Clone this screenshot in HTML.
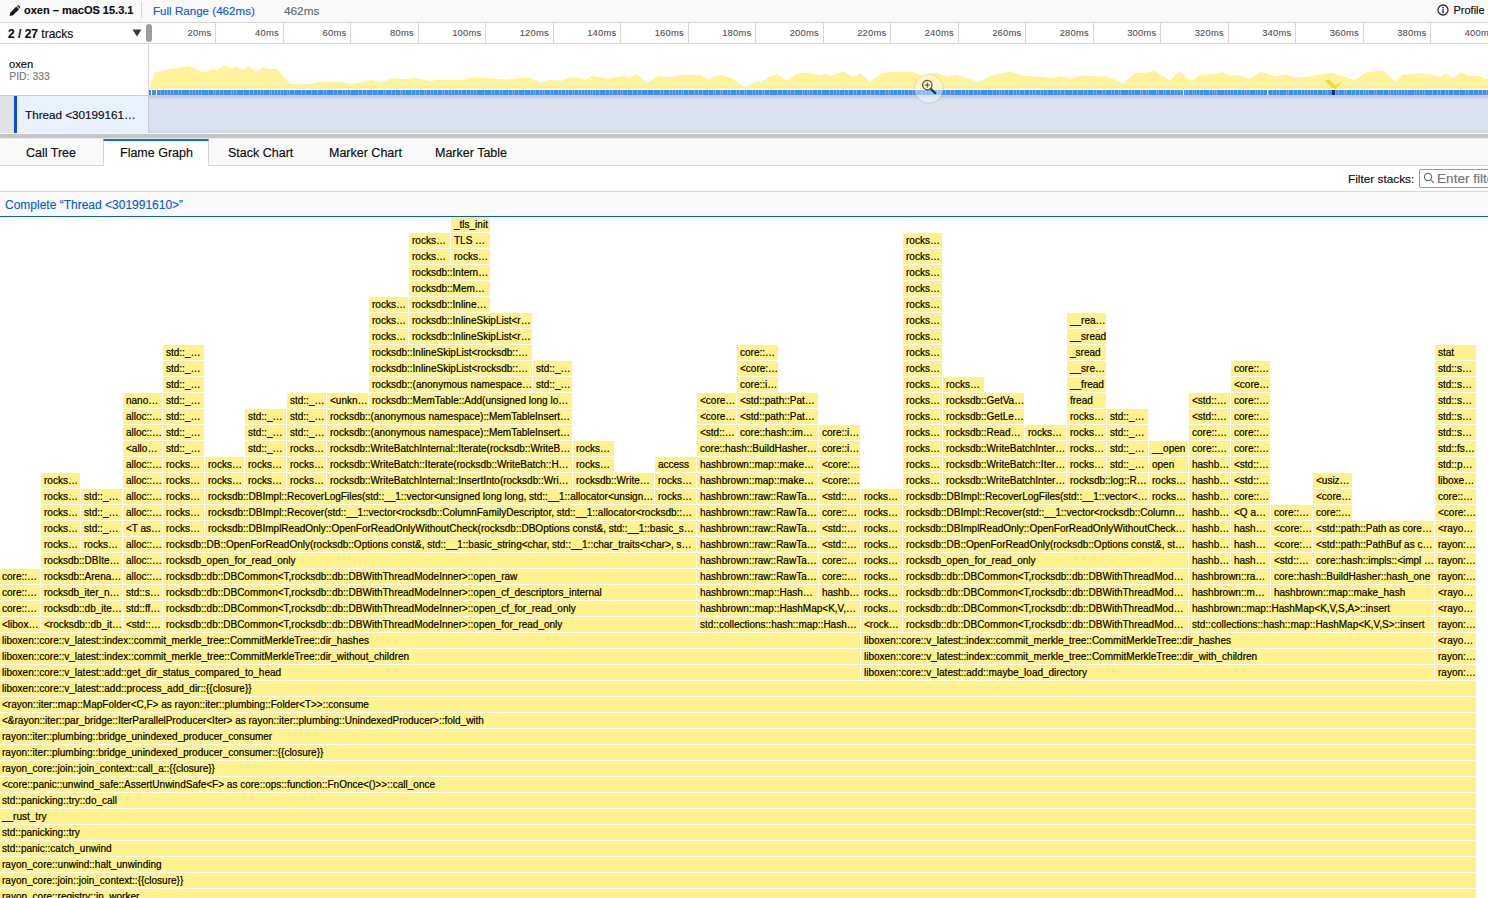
<!DOCTYPE html>
<html><head><meta charset="utf-8"><style>
*{margin:0;padding:0;box-sizing:border-box}
html,body{width:1488px;height:898px;overflow:hidden;background:#fff;font-family:"Liberation Sans",sans-serif;color:#0c0c0d;position:relative}
.a{-webkit-text-stroke:0.15px currentColor}
.a{position:absolute}
.b{position:absolute;height:15px;background:#fff28c;font-size:10px;-webkit-text-stroke:0.2px #000;line-height:15px;padding-left:3px;white-space:nowrap;overflow:hidden;color:#000}
.tk{position:absolute;top:23px;width:1px;height:20px;background:#d7d7db}
.tt{position:absolute;top:23px;width:56px;height:20px;line-height:20px;text-align:right;font-size:9.4px;letter-spacing:0.22px;color:#505054;-webkit-text-stroke:0.1px #505054}
.sg{position:absolute;top:90px;width:0.9px;height:5px;background:#72acfb}
</style></head><body>
<div class="a" style="left:0;top:0;width:1488px;height:23px;background:#f9f9fa;border-bottom:1px solid #d7d7db"></div>
<svg class="a" style="left:8.5px;top:4.5px" width="11.5" height="11.5" viewBox="0 0 16 16"><path d="M0.8 15.2 L1.9 10.3 L10.2 2 L14 5.8 L5.7 14.1 Z" fill="#1b1b1d"/><path d="M11.2 1 Q12.6 -0.4 14 1 L15 2 Q16.4 3.4 15 4.8 L14.8 5 L11 1.2 Z" fill="#1b1b1d"/><path d="M2.2 13.8 L3.5 10.8 L5.2 12.5 Z" fill="#f9f9fa" opacity="0.0"/></svg>
<div class="a" style="left:24px;top:2.7px;font-size:11px;font-weight:bold;line-height:15px;color:#0c0c0d">oxen – macOS 15.3.1</div>
<div class="a" style="left:141px;top:2px;width:1px;height:16px;background:#d7d7db"></div>
<div class="a" style="left:153px;top:2.9px;font-size:11.6px;line-height:15px;color:#0b5bd6">Full Range (462ms)</div>
<div class="a" style="left:284px;top:3.5px;font-size:11.8px;line-height:15px;color:#6a6a6e">462ms</div>
<svg class="a" style="left:1437px;top:4px" width="13" height="13" viewBox="0 0 13 13"><circle cx="6" cy="6" r="5" fill="none" stroke="#2b2b2e" stroke-width="1.3"/><rect x="5.3" y="5.2" width="1.4" height="4" fill="#2b2b2e"/><circle cx="6" cy="3.5" r="0.85" fill="#2b2b2e"/></svg>
<div class="a" style="left:1453.5px;top:2.7px;font-size:11px;line-height:15px">Profile</div>

<div class="a" style="left:0;top:23px;width:1488px;height:21px;background:#fff;border-bottom:1px solid #d7d7db"></div>
<div class="a" style="left:8px;top:26px;font-size:12px;line-height:16px"><b>2 / 27</b> tracks</div>
<svg class="a" style="left:132px;top:29px" width="10" height="8" viewBox="0 0 10 8"><path d="M0.5 0.5 L9.5 0.5 L5 7.5 Z" fill="#3a3a3e"/></svg>
<div class="a" style="left:146px;top:24px;width:6px;height:18px;border-radius:3px;background:#9d9d9f"></div>
<div class="tk" style="left:215.4px"></div><div class="tt" style="left:155.4px">20ms</div>
<div class="tk" style="left:282.9px"></div><div class="tt" style="left:222.9px">40ms</div>
<div class="tk" style="left:350.4px"></div><div class="tt" style="left:290.4px">60ms</div>
<div class="tk" style="left:417.9px"></div><div class="tt" style="left:357.9px">80ms</div>
<div class="tk" style="left:485.4px"></div><div class="tt" style="left:425.4px">100ms</div>
<div class="tk" style="left:552.9px"></div><div class="tt" style="left:492.9px">120ms</div>
<div class="tk" style="left:620.4px"></div><div class="tt" style="left:560.4px">140ms</div>
<div class="tk" style="left:687.9px"></div><div class="tt" style="left:627.9px">160ms</div>
<div class="tk" style="left:755.4px"></div><div class="tt" style="left:695.4px">180ms</div>
<div class="tk" style="left:822.9px"></div><div class="tt" style="left:762.9px">200ms</div>
<div class="tk" style="left:890.4px"></div><div class="tt" style="left:830.4px">220ms</div>
<div class="tk" style="left:957.9px"></div><div class="tt" style="left:897.9px">240ms</div>
<div class="tk" style="left:1025.4px"></div><div class="tt" style="left:965.4px">260ms</div>
<div class="tk" style="left:1092.9px"></div><div class="tt" style="left:1032.9px">280ms</div>
<div class="tk" style="left:1160.4px"></div><div class="tt" style="left:1100.4px">300ms</div>
<div class="tk" style="left:1227.9px"></div><div class="tt" style="left:1167.9px">320ms</div>
<div class="tk" style="left:1295.4px"></div><div class="tt" style="left:1235.4px">340ms</div>
<div class="tk" style="left:1362.9px"></div><div class="tt" style="left:1302.9px">360ms</div>
<div class="tk" style="left:1430.4px"></div><div class="tt" style="left:1370.4px">380ms</div>
<div class="tk" style="left:1497.9px"></div><div class="tt" style="left:1437.9px">400ms</div>

<div class="a" style="left:148px;top:44px;width:1px;height:52px;background:#d7d7db"></div>
<div class="a" style="left:9px;top:57px;font-size:11.2px;line-height:14px">oxen</div>
<div class="a" style="left:9.3px;top:69.7px;font-size:10.4px;line-height:13px;color:#7a7a7a">PID: 333</div>
<svg class="a" style="left:0;top:0" width="1488" height="96"><polygon points="148.0,89.0 149.0,89.0 151.9,80.1 155.3,72.1 158.7,71.5 163.3,71.0 170.0,68.7 177.0,68.3 187.3,66.0 194.1,67.6 202.0,71.7 206.7,71.5 212.4,69.2 217.0,70.3 224.5,65.3 230.7,68.7 236.4,66.4 242.1,69.9 249.0,66.0 257.0,72.8 262.7,66.9 269.5,69.2 276.4,68.7 282.1,75.6 290.1,84.0 295.8,84.0 309.5,84.3 321.0,81.7 339.2,82.0 350.7,84.0 362.0,82.0 371.2,80.1 380.4,82.4 393.0,78.3 405.5,79.2 414.7,77.9 430.6,81.3 437.5,79.7 462.6,80.1 469.5,77.9 480.0,77.9 493.7,78.5 505.1,79.7 512.0,79.0 528.0,77.2 540.6,82.9 549.7,80.1 562.3,80.8 570.3,77.2 580.5,78.3 585.1,80.1 592.0,76.0 608.0,78.5 622.8,76.0 629.7,77.9 636.5,73.7 646.8,82.9 658.2,76.0 672.0,77.4 678.8,75.1 699.4,74.4 708.5,79.7 720.0,74.4 731.4,77.9 745.1,88.1 756.5,81.3 761.0,82.9 767.9,77.4 777.0,74.2 787.4,80.6 797.6,73.3 809.0,72.8 820.0,75.6 824.1,73.7 831.0,76.0 843.6,71.5 852.7,76.7 860.7,73.3 869.8,82.4 881.3,73.3 895.0,71.7 913.3,72.1 922.4,75.6 936.0,72.8 947.5,76.7 956.7,75.1 965.8,77.9 978.4,82.0 993.2,75.1 1009.2,71.7 1025.2,76.0 1041.2,76.7 1052.7,78.3 1060.7,76.0 1070.9,78.3 1082.4,75.6 1107.5,76.7 1123.5,83.6 1135.0,72.8 1146.4,72.8 1154.5,70.9 1161.4,75.0 1170.4,80.4 1179.1,71.4 1190.9,81.1 1202.2,74.3 1213.6,74.3 1222.7,72.0 1230.6,75.9 1238.6,75.0 1248.8,78.9 1261.3,71.4 1274.9,76.6 1286.3,74.3 1294.3,77.7 1309.0,76.6 1331.7,72.7 1354.4,80.0 1367.0,72.0 1384.0,70.4 1395.3,81.8 1402.2,75.0 1418.0,73.2 1434.0,75.0 1439.6,77.7 1446.4,73.6 1453.3,78.2 1461.2,72.5 1468.0,76.1 1479.4,75.9 1486.2,79.5 1488.0,77.7 1488.0,89.0" fill="#fff29c"/></svg>
<div class="a" style="left:149px;top:90px;width:1339px;height:5px;background:#3a8ffb"></div>
<div class="sg" style="left:160.0px"></div><div class="sg" style="left:164.0px"></div><div class="sg" style="left:167.2px"></div><div class="sg" style="left:169.7px"></div><div class="sg" style="left:173.2px"></div><div class="sg" style="left:178.2px"></div><div class="sg" style="left:181.4px"></div><div class="sg" style="left:188.9px"></div><div class="sg" style="left:192.1px"></div><div class="sg" style="left:195.1px"></div><div class="sg" style="left:198.3px"></div><div class="sg" style="left:200.5px"></div><div class="sg" style="left:208.0px"></div><div class="sg" style="left:212.5px"></div><div class="sg" style="left:215.0px"></div><div class="sg" style="left:219.0px"></div><div class="sg" style="left:223.0px"></div><div class="sg" style="left:230.5px"></div><div class="sg" style="left:233.0px"></div><div class="sg" style="left:235.5px"></div><div class="sg" style="left:243.0px"></div><div class="sg" style="left:249.0px"></div><div class="sg" style="left:252.5px"></div><div class="sg" style="left:256.5px"></div><div class="sg" style="left:260.0px"></div><div class="sg" style="left:262.5px"></div><div class="sg" style="left:268.5px"></div><div class="sg" style="left:270.7px"></div><div class="sg" style="left:273.7px"></div><div class="sg" style="left:277.2px"></div><div class="sg" style="left:280.4px"></div><div class="sg" style="left:282.6px"></div><div class="sg" style="left:287.1px"></div><div class="sg" style="left:289.3px"></div><div class="sg" style="left:293.8px"></div><div class="sg" style="left:301.3px"></div><div class="sg" style="left:304.5px"></div><div class="sg" style="left:310.5px"></div><div class="sg" style="left:316.5px"></div><div class="sg" style="left:322.5px"></div><div class="sg" style="left:325.7px"></div><div class="sg" style="left:333.2px"></div><div class="sg" style="left:336.7px"></div><div class="sg" style="left:341.7px"></div><div class="sg" style="left:344.7px"></div><div class="sg" style="left:346.9px"></div><div class="sg" style="left:350.4px"></div><div class="sg" style="left:357.9px"></div><div class="sg" style="left:361.9px"></div><div class="sg" style="left:366.4px"></div><div class="sg" style="left:372.4px"></div><div class="sg" style="left:376.9px"></div><div class="sg" style="left:382.9px"></div><div class="sg" style="left:385.4px"></div><div class="sg" style="left:391.4px"></div><div class="sg" style="left:394.6px"></div><div class="sg" style="left:399.6px"></div><div class="sg" style="left:402.1px"></div><div class="sg" style="left:405.3px"></div><div class="sg" style="left:411.3px"></div><div class="sg" style="left:414.5px"></div><div class="sg" style="left:418.5px"></div><div class="sg" style="left:423.5px"></div><div class="sg" style="left:425.7px"></div><div class="sg" style="left:430.2px"></div><div class="sg" style="left:433.4px"></div><div class="sg" style="left:436.9px"></div><div class="sg" style="left:441.9px"></div><div class="sg" style="left:444.4px"></div><div class="sg" style="left:447.6px"></div><div class="sg" style="left:450.8px"></div><div class="sg" style="left:453.8px"></div><div class="sg" style="left:457.8px"></div><div class="sg" style="left:461.0px"></div><div class="sg" style="left:465.5px"></div><div class="sg" style="left:470.0px"></div><div class="sg" style="left:473.0px"></div><div class="sg" style="left:476.0px"></div><div class="sg" style="left:483.5px"></div><div class="sg" style="left:491.0px"></div><div class="sg" style="left:494.0px"></div><div class="sg" style="left:499.0px"></div><div class="sg" style="left:502.0px"></div><div class="sg" style="left:508.0px"></div><div class="sg" style="left:511.5px"></div><div class="sg" style="left:513.7px"></div><div class="sg" style="left:518.2px"></div><div class="sg" style="left:524.2px"></div><div class="sg" style="left:530.2px"></div><div class="sg" style="left:533.2px"></div><div class="sg" style="left:535.4px"></div><div class="sg" style="left:538.6px"></div><div class="sg" style="left:541.8px"></div><div class="sg" style="left:544.0px"></div><div class="sg" style="left:550.0px"></div><div class="sg" style="left:553.2px"></div><div class="sg" style="left:558.2px"></div><div class="sg" style="left:560.7px"></div><div class="sg" style="left:565.2px"></div><div class="sg" style="left:567.7px"></div><div class="sg" style="left:571.7px"></div><div class="sg" style="left:573.9px"></div><div class="sg" style="left:578.4px"></div><div class="sg" style="left:580.6px"></div><div class="sg" style="left:583.6px"></div><div class="sg" style="left:586.6px"></div><div class="sg" style="left:589.8px"></div><div class="sg" style="left:592.3px"></div><div class="sg" style="left:594.5px"></div><div class="sg" style="left:598.5px"></div><div class="sg" style="left:604.5px"></div><div class="sg" style="left:609.0px"></div><div class="sg" style="left:612.2px"></div><div class="sg" style="left:616.7px"></div><div class="sg" style="left:620.2px"></div><div class="sg" style="left:622.4px"></div><div class="sg" style="left:627.4px"></div><div class="sg" style="left:632.4px"></div><div class="sg" style="left:637.4px"></div><div class="sg" style="left:640.9px"></div><div class="sg" style="left:646.9px"></div><div class="sg" style="left:652.9px"></div><div class="sg" style="left:660.4px"></div><div class="sg" style="left:662.9px"></div><div class="sg" style="left:668.9px"></div><div class="sg" style="left:672.1px"></div><div class="sg" style="left:674.6px"></div><div class="sg" style="left:677.6px"></div><div class="sg" style="left:680.8px"></div><div class="sg" style="left:683.3px"></div><div class="sg" style="left:687.8px"></div><div class="sg" style="left:693.8px"></div><div class="sg" style="left:697.8px"></div><div class="sg" style="left:702.3px"></div><div class="sg" style="left:708.3px"></div><div class="sg" style="left:712.8px"></div><div class="sg" style="left:715.3px"></div><div class="sg" style="left:719.8px"></div><div class="sg" style="left:722.3px"></div><div class="sg" style="left:727.3px"></div><div class="sg" style="left:729.5px"></div><div class="sg" style="left:735.5px"></div><div class="sg" style="left:738.7px"></div><div class="sg" style="left:743.7px"></div><div class="sg" style="left:745.9px"></div><div class="sg" style="left:751.9px"></div><div class="sg" style="left:755.1px"></div><div class="sg" style="left:758.3px"></div><div class="sg" style="left:761.8px"></div><div class="sg" style="left:764.0px"></div><div class="sg" style="left:769.0px"></div><div class="sg" style="left:776.5px"></div><div class="sg" style="left:781.5px"></div><div class="sg" style="left:786.5px"></div><div class="sg" style="left:789.7px"></div><div class="sg" style="left:794.2px"></div><div class="sg" style="left:801.7px"></div><div class="sg" style="left:803.9px"></div><div class="sg" style="left:807.1px"></div><div class="sg" style="left:809.3px"></div><div class="sg" style="left:811.5px"></div><div class="sg" style="left:816.5px"></div><div class="sg" style="left:821.0px"></div><div class="sg" style="left:828.5px"></div><div class="sg" style="left:833.0px"></div><div class="sg" style="left:836.2px"></div><div class="sg" style="left:839.4px"></div><div class="sg" style="left:844.4px"></div><div class="sg" style="left:847.9px"></div><div class="sg" style="left:852.9px"></div><div class="sg" style="left:856.4px"></div><div class="sg" style="left:861.4px"></div><div class="sg" style="left:866.4px"></div><div class="sg" style="left:869.6px"></div><div class="sg" style="left:874.1px"></div><div class="sg" style="left:878.6px"></div><div class="sg" style="left:884.6px"></div><div class="sg" style="left:887.6px"></div><div class="sg" style="left:889.8px"></div><div class="sg" style="left:893.0px"></div><div class="sg" style="left:896.5px"></div><div class="sg" style="left:901.0px"></div><div class="sg" style="left:903.5px"></div><div class="sg" style="left:907.5px"></div><div class="sg" style="left:912.0px"></div><div class="sg" style="left:916.0px"></div><div class="sg" style="left:921.0px"></div><div class="sg" style="left:924.5px"></div><div class="sg" style="left:930.5px"></div><div class="sg" style="left:933.5px"></div><div class="sg" style="left:936.5px"></div><div class="sg" style="left:939.7px"></div><div class="sg" style="left:944.7px"></div><div class="sg" style="left:949.7px"></div><div class="sg" style="left:953.7px"></div><div class="sg" style="left:961.2px"></div><div class="sg" style="left:964.7px"></div><div class="sg" style="left:967.7px"></div><div class="sg" style="left:972.7px"></div><div class="sg" style="left:976.7px"></div><div class="sg" style="left:979.9px"></div><div class="sg" style="left:987.4px"></div><div class="sg" style="left:991.9px"></div><div class="sg" style="left:995.9px"></div><div class="sg" style="left:998.9px"></div><div class="sg" style="left:1001.1px"></div><div class="sg" style="left:1003.6px"></div><div class="sg" style="left:1007.6px"></div><div class="sg" style="left:1012.6px"></div><div class="sg" style="left:1015.8px"></div><div class="sg" style="left:1019.3px"></div><div class="sg" style="left:1023.8px"></div><div class="sg" style="left:1028.8px"></div><div class="sg" style="left:1031.8px"></div><div class="sg" style="left:1035.0px"></div><div class="sg" style="left:1040.0px"></div><div class="sg" style="left:1043.2px"></div><div class="sg" style="left:1046.7px"></div><div class="sg" style="left:1052.7px"></div><div class="sg" style="left:1057.2px"></div><div class="sg" style="left:1059.7px"></div><div class="sg" style="left:1064.2px"></div><div class="sg" style="left:1071.7px"></div><div class="sg" style="left:1076.7px"></div><div class="sg" style="left:1082.7px"></div><div class="sg" style="left:1087.2px"></div><div class="sg" style="left:1093.2px"></div><div class="sg" style="left:1096.4px"></div><div class="sg" style="left:1102.4px"></div><div class="sg" style="left:1104.6px"></div><div class="sg" style="left:1110.6px"></div><div class="sg" style="left:1114.1px"></div><div class="sg" style="left:1118.1px"></div><div class="sg" style="left:1120.3px"></div><div class="sg" style="left:1127.8px"></div><div class="sg" style="left:1131.0px"></div><div class="sg" style="left:1133.5px"></div><div class="sg" style="left:1139.5px"></div><div class="sg" style="left:1142.0px"></div><div class="sg" style="left:1146.0px"></div><div class="sg" style="left:1148.2px"></div><div class="sg" style="left:1155.7px"></div><div class="sg" style="left:1158.2px"></div><div class="sg" style="left:1162.7px"></div><div class="sg" style="left:1165.2px"></div><div class="sg" style="left:1170.2px"></div><div class="sg" style="left:1174.2px"></div><div class="sg" style="left:1177.2px"></div><div class="sg" style="left:1180.4px"></div><div class="sg" style="left:1184.9px"></div><div class="sg" style="left:1187.9px"></div><div class="sg" style="left:1191.9px"></div><div class="sg" style="left:1194.1px"></div><div class="sg" style="left:1196.3px"></div><div class="sg" style="left:1198.8px"></div><div class="sg" style="left:1202.8px"></div><div class="sg" style="left:1208.8px"></div><div class="sg" style="left:1212.0px"></div><div class="sg" style="left:1214.2px"></div><div class="sg" style="left:1216.4px"></div><div class="sg" style="left:1223.9px"></div><div class="sg" style="left:1226.9px"></div><div class="sg" style="left:1230.4px"></div><div class="sg" style="left:1232.9px"></div><div class="sg" style="left:1237.4px"></div><div class="sg" style="left:1241.4px"></div><div class="sg" style="left:1243.6px"></div><div class="sg" style="left:1246.1px"></div><div class="sg" style="left:1248.6px"></div><div class="sg" style="left:1254.6px"></div><div class="sg" style="left:1256.8px"></div><div class="sg" style="left:1260.0px"></div><div class="sg" style="left:1263.0px"></div><div class="sg" style="left:1268.0px"></div><div class="sg" style="left:1271.5px"></div><div class="sg" style="left:1276.0px"></div><div class="sg" style="left:1278.5px"></div><div class="sg" style="left:1286.0px"></div><div class="sg" style="left:1288.2px"></div><div class="sg" style="left:1293.2px"></div><div class="sg" style="left:1297.2px"></div><div class="sg" style="left:1301.2px"></div><div class="sg" style="left:1304.2px"></div><div class="sg" style="left:1306.7px"></div><div class="sg" style="left:1309.7px"></div><div class="sg" style="left:1313.2px"></div><div class="sg" style="left:1317.2px"></div><div class="sg" style="left:1321.7px"></div><div class="sg" style="left:1325.2px"></div><div class="sg" style="left:1327.4px"></div><div class="sg" style="left:1334.9px"></div><div class="sg" style="left:1338.1px"></div><div class="sg" style="left:1344.1px"></div><div class="sg" style="left:1346.3px"></div><div class="sg" style="left:1350.8px"></div><div class="sg" style="left:1354.8px"></div><div class="sg" style="left:1359.3px"></div><div class="sg" style="left:1362.5px"></div><div class="sg" style="left:1365.0px"></div><div class="sg" style="left:1367.5px"></div><div class="sg" style="left:1373.5px"></div><div class="sg" style="left:1375.7px"></div><div class="sg" style="left:1383.2px"></div><div class="sg" style="left:1388.2px"></div><div class="sg" style="left:1390.4px"></div><div class="sg" style="left:1392.6px"></div><div class="sg" style="left:1396.1px"></div><div class="sg" style="left:1398.3px"></div><div class="sg" style="left:1401.3px"></div><div class="sg" style="left:1403.5px"></div><div class="sg" style="left:1406.5px"></div><div class="sg" style="left:1414.0px"></div><div class="sg" style="left:1416.2px"></div><div class="sg" style="left:1419.2px"></div><div class="sg" style="left:1421.7px"></div><div class="sg" style="left:1424.2px"></div><div class="sg" style="left:1431.7px"></div><div class="sg" style="left:1436.7px"></div><div class="sg" style="left:1440.2px"></div><div class="sg" style="left:1445.2px"></div><div class="sg" style="left:1448.2px"></div><div class="sg" style="left:1453.2px"></div><div class="sg" style="left:1459.2px"></div><div class="sg" style="left:1465.2px"></div><div class="sg" style="left:1468.4px"></div><div class="sg" style="left:1472.9px"></div><div class="sg" style="left:1477.9px"></div><div class="sg" style="left:1482.4px"></div><div class="sg" style="left:1486.4px"></div><div class="a" style="left:150.6px;top:90px;width:1.4px;height:5px;background:#fff"></div><div class="a" style="left:156px;top:90px;width:1.2px;height:5px;background:#fff"></div><div class="a" style="left:1183px;top:90px;width:1.2px;height:5px;background:#fff"></div><div class="a" style="left:1267px;top:90px;width:1.2px;height:5px;background:#fff"></div>
<div class="a" style="left:0;top:95px;width:1488px;height:1px;background:#cfcfd4"></div>

<div class="a" style="left:0;top:96px;width:14px;height:37px;background:#e2e2e6"></div>
<div class="a" style="left:14px;top:96px;width:3px;height:37px;background:#0b4fd8"></div>
<div class="a" style="left:17px;top:96px;width:131px;height:37px;background:#e8f1fd"></div>
<div class="a" style="left:148px;top:96px;width:1px;height:37px;background:#c9ccd2"></div>
<div class="a" style="left:149px;top:96px;width:1339px;height:37px;background:linear-gradient(to bottom,#c3c8d0 0px,#d2d9e3 2px,#d9e2ee 5px,#d9e2ee 32px,#d0d8e3 37px)"></div>
<div class="a" style="left:25px;top:107px;font-size:11.7px;line-height:16px">Thread &lt;30199161…</div>
<div class="a" style="left:0;top:133px;width:1488px;height:1px;background:#f4f6f9"></div><div class="a" style="left:0;top:134px;width:1488px;height:4px;background:#c6c6c6"></div><div class="a" style="left:0;top:138px;width:1488px;height:1px;background:#ececec"></div>

<div class="a" style="left:0;top:139px;width:1488px;height:27px;background:#f9f9fa;border-bottom:1px solid #d7d7db"></div>
<div class="a" style="left:103px;top:139px;width:106px;height:27px;background:#fff;border-left:1px solid #d7d7db;border-right:1px solid #d7d7db;border-top:2px solid #0a6cf5"></div>
<div class="a" style="left:26px;top:144.5px;font-size:12.5px;line-height:16px">Call Tree</div>
<div class="a" style="left:120px;top:144.5px;font-size:12.5px;line-height:16px">Flame Graph</div>
<div class="a" style="left:228px;top:144.5px;font-size:12.5px;line-height:16px">Stack Chart</div>
<div class="a" style="left:329px;top:144.5px;font-size:12.5px;line-height:16px">Marker Chart</div>
<div class="a" style="left:435px;top:144.5px;font-size:12.5px;line-height:16px">Marker Table</div>

<div class="a" style="left:0;top:166px;width:1488px;height:26px;background:#fff;border-bottom:1px solid #d7d7db"></div>
<div class="a" style="left:1348px;top:170.7px;font-size:11.8px;line-height:16px">Filter stacks:</div>
<div class="a" style="left:1419px;top:169px;width:80px;height:19px;border:1px solid #9a9a9e;border-radius:2px;background:#fff"></div>
<svg class="a" style="left:1423px;top:172px" width="12" height="12" viewBox="0 0 12 12"><circle cx="5" cy="5" r="3.6" fill="none" stroke="#6b6b6f" stroke-width="1.1"/><path d="M7.6 7.6 L10.8 10.8" stroke="#6b6b6f" stroke-width="1.2"/></svg>
<div class="a" style="left:1437px;top:169.5px;font-size:13.6px;line-height:17px;color:#737373;white-space:nowrap">Enter filte</div>

<div class="a" style="left:0;top:192px;width:1488px;height:24px;background:#f9f9fa"></div>
<div class="a" style="left:5px;top:197.5px;font-size:12px;line-height:15px;color:#0b5bd6">Complete “Thread &lt;301991610&gt;”</div>
<div class="a" style="left:0;top:216px;width:1488px;height:1px;background:#0b5bd6"></div>

<svg class="a" style="left:913px;top:73px" width="32" height="32" viewBox="0 0 32 32"><circle cx="15.8" cy="15.8" r="14.5" fill="rgba(255,255,255,0.4)" stroke="rgba(0,0,0,0.13)" stroke-width="0.9"/><circle cx="14.3" cy="12.1" r="4.7" fill="none" stroke="rgba(20,20,10,0.72)" stroke-width="1.2"/><path d="M11.7 12.1 H16.9 M14.3 9.5 V14.7" stroke="rgba(20,20,10,0.72)" stroke-width="1"/><path d="M18.3 16.4 L22.2 20.2" stroke="rgba(10,20,40,0.8)" stroke-width="2.4" stroke-linecap="round"/></svg>
<svg class="a" style="left:1324px;top:79px" width="20" height="11" viewBox="0 0 20 11"><path d="M1 1.8 Q4 0.5 5.5 1 Q7.5 1.8 10 5.5 Q11.5 6 13.5 5 L18.5 2.5 Q15 7 12 9.5 Q10 10 8.5 9.2 Z" fill="#fcd934"/></svg>
<div class="a" style="left:1331.5px;top:90px;width:3px;height:5px;background:#0a2a9a"></div>

<div class="b" style="left:451px;top:217px;width:39px">_tls_init</div>
<div class="b" style="left:409px;top:233px;width:41px">rocks…</div>
<div class="b" style="left:451px;top:233px;width:39px">TLS …</div>
<div class="b" style="left:903px;top:233px;width:39px">rocks…</div>
<div class="b" style="left:409px;top:249px;width:41px">rocks…</div>
<div class="b" style="left:451px;top:249px;width:39px">rocks…</div>
<div class="b" style="left:903px;top:249px;width:39px">rocks…</div>
<div class="b" style="left:409px;top:265px;width:81px">rocksdb::Intern…</div>
<div class="b" style="left:903px;top:265px;width:39px">rocks…</div>
<div class="b" style="left:409px;top:281px;width:81px">rocksdb::Mem…</div>
<div class="b" style="left:903px;top:281px;width:39px">rocks…</div>
<div class="b" style="left:369px;top:297px;width:39px">rocks…</div>
<div class="b" style="left:409px;top:297px;width:81px">rocksdb::Inline…</div>
<div class="b" style="left:903px;top:297px;width:39px">rocks…</div>
<div class="b" style="left:369px;top:313px;width:39px">rocks…</div>
<div class="b" style="left:409px;top:313px;width:123px">rocksdb::InlineSkipList&lt;r…</div>
<div class="b" style="left:903px;top:313px;width:39px">rocks…</div>
<div class="b" style="left:1067px;top:313px;width:39px">__rea…</div>
<div class="b" style="left:369px;top:329px;width:39px">rocks…</div>
<div class="b" style="left:409px;top:329px;width:123px">rocksdb::InlineSkipList&lt;r…</div>
<div class="b" style="left:903px;top:329px;width:39px">rocks…</div>
<div class="b" style="left:1067px;top:329px;width:39px">__sread</div>
<div class="b" style="left:163px;top:345px;width:41px">std::_…</div>
<div class="b" style="left:369px;top:345px;width:163px">rocksdb::InlineSkipList&lt;rocksdb::…</div>
<div class="b" style="left:737px;top:345px;width:41px">core::…</div>
<div class="b" style="left:903px;top:345px;width:39px">rocks…</div>
<div class="b" style="left:1067px;top:345px;width:39px">_sread</div>
<div class="b" style="left:1435px;top:345px;width:41px">stat</div>
<div class="b" style="left:163px;top:361px;width:41px">std::_…</div>
<div class="b" style="left:369px;top:361px;width:163px">rocksdb::InlineSkipList&lt;rocksdb::…</div>
<div class="b" style="left:533px;top:361px;width:39px">std::_…</div>
<div class="b" style="left:737px;top:361px;width:41px">&lt;core:…</div>
<div class="b" style="left:903px;top:361px;width:39px">rocks…</div>
<div class="b" style="left:1067px;top:361px;width:39px">__sre…</div>
<div class="b" style="left:1231px;top:361px;width:39px">core::…</div>
<div class="b" style="left:1435px;top:361px;width:41px">std::s…</div>
<div class="b" style="left:163px;top:377px;width:41px">std::_…</div>
<div class="b" style="left:369px;top:377px;width:163px">rocksdb::(anonymous namespace…</div>
<div class="b" style="left:533px;top:377px;width:39px">std::_…</div>
<div class="b" style="left:737px;top:377px;width:41px">core::i…</div>
<div class="b" style="left:903px;top:377px;width:39px">rocks…</div>
<div class="b" style="left:943px;top:377px;width:41px">rocks…</div>
<div class="b" style="left:1067px;top:377px;width:39px">__fread</div>
<div class="b" style="left:1231px;top:377px;width:39px">&lt;core…</div>
<div class="b" style="left:1435px;top:377px;width:41px">std::s…</div>
<div class="b" style="left:123px;top:393px;width:39px">nano…</div>
<div class="b" style="left:163px;top:393px;width:41px">std::_…</div>
<div class="b" style="left:287px;top:393px;width:39px">std::_…</div>
<div class="b" style="left:327px;top:393px;width:41px">&lt;unkn…</div>
<div class="b" style="left:369px;top:393px;width:203px">rocksdb::MemTable::Add(unsigned long lo…</div>
<div class="b" style="left:697px;top:393px;width:39px">&lt;core…</div>
<div class="b" style="left:737px;top:393px;width:81px">&lt;std::path::Pat…</div>
<div class="b" style="left:903px;top:393px;width:39px">rocks…</div>
<div class="b" style="left:943px;top:393px;width:81px">rocksdb::GetVa…</div>
<div class="b" style="left:1067px;top:393px;width:39px">fread</div>
<div class="b" style="left:1189px;top:393px;width:41px">&lt;std::…</div>
<div class="b" style="left:1231px;top:393px;width:39px">core::…</div>
<div class="b" style="left:1435px;top:393px;width:41px">std::s…</div>
<div class="b" style="left:123px;top:409px;width:39px">alloc::…</div>
<div class="b" style="left:163px;top:409px;width:41px">std::_…</div>
<div class="b" style="left:245px;top:409px;width:41px">std::_…</div>
<div class="b" style="left:287px;top:409px;width:39px">std::_…</div>
<div class="b" style="left:327px;top:409px;width:245px">rocksdb::(anonymous namespace)::MemTableInsert…</div>
<div class="b" style="left:697px;top:409px;width:39px">&lt;core…</div>
<div class="b" style="left:737px;top:409px;width:81px">&lt;std::path::Pat…</div>
<div class="b" style="left:903px;top:409px;width:39px">rocks…</div>
<div class="b" style="left:943px;top:409px;width:81px">rocksdb::GetLe…</div>
<div class="b" style="left:1067px;top:409px;width:39px">rocks…</div>
<div class="b" style="left:1107px;top:409px;width:41px">std::_…</div>
<div class="b" style="left:1189px;top:409px;width:41px">&lt;std::…</div>
<div class="b" style="left:1231px;top:409px;width:39px">core::…</div>
<div class="b" style="left:1435px;top:409px;width:41px">std::s…</div>
<div class="b" style="left:123px;top:425px;width:39px">alloc::…</div>
<div class="b" style="left:163px;top:425px;width:41px">std::_…</div>
<div class="b" style="left:245px;top:425px;width:41px">std::_…</div>
<div class="b" style="left:287px;top:425px;width:39px">std::_…</div>
<div class="b" style="left:327px;top:425px;width:245px">rocksdb::(anonymous namespace)::MemTableInsert…</div>
<div class="b" style="left:697px;top:425px;width:39px">&lt;std::…</div>
<div class="b" style="left:737px;top:425px;width:81px">core::hash::im…</div>
<div class="b" style="left:819px;top:425px;width:41px">core::i…</div>
<div class="b" style="left:903px;top:425px;width:39px">rocks…</div>
<div class="b" style="left:943px;top:425px;width:81px">rocksdb::Read…</div>
<div class="b" style="left:1025px;top:425px;width:41px">rocks…</div>
<div class="b" style="left:1067px;top:425px;width:39px">rocks…</div>
<div class="b" style="left:1107px;top:425px;width:41px">std::_…</div>
<div class="b" style="left:1189px;top:425px;width:41px">core::…</div>
<div class="b" style="left:1231px;top:425px;width:39px">core::…</div>
<div class="b" style="left:1435px;top:425px;width:41px">std::s…</div>
<div class="b" style="left:123px;top:441px;width:39px">&lt;allo…</div>
<div class="b" style="left:163px;top:441px;width:41px">std::_…</div>
<div class="b" style="left:245px;top:441px;width:41px">std::_…</div>
<div class="b" style="left:287px;top:441px;width:39px">rocks…</div>
<div class="b" style="left:327px;top:441px;width:245px">rocksdb::WriteBatchInternal::Iterate(rocksdb::WriteB…</div>
<div class="b" style="left:573px;top:441px;width:41px">rocks…</div>
<div class="b" style="left:697px;top:441px;width:121px">core::hash::BuildHasher…</div>
<div class="b" style="left:819px;top:441px;width:41px">core::i…</div>
<div class="b" style="left:903px;top:441px;width:39px">rocks…</div>
<div class="b" style="left:943px;top:441px;width:123px">rocksdb::WriteBatchInter…</div>
<div class="b" style="left:1067px;top:441px;width:39px">rocks…</div>
<div class="b" style="left:1107px;top:441px;width:41px">std::_…</div>
<div class="b" style="left:1149px;top:441px;width:39px">__open</div>
<div class="b" style="left:1189px;top:441px;width:41px">core::…</div>
<div class="b" style="left:1231px;top:441px;width:39px">core::…</div>
<div class="b" style="left:1435px;top:441px;width:41px">std::fs…</div>
<div class="b" style="left:123px;top:457px;width:39px">alloc::…</div>
<div class="b" style="left:163px;top:457px;width:41px">rocks…</div>
<div class="b" style="left:205px;top:457px;width:39px">rocks…</div>
<div class="b" style="left:245px;top:457px;width:41px">rocks…</div>
<div class="b" style="left:287px;top:457px;width:39px">rocks…</div>
<div class="b" style="left:327px;top:457px;width:245px">rocksdb::WriteBatch::Iterate(rocksdb::WriteBatch::H…</div>
<div class="b" style="left:573px;top:457px;width:41px">rocks…</div>
<div class="b" style="left:655px;top:457px;width:41px">access</div>
<div class="b" style="left:697px;top:457px;width:121px">hashbrown::map::make…</div>
<div class="b" style="left:819px;top:457px;width:41px">&lt;core:…</div>
<div class="b" style="left:903px;top:457px;width:39px">rocks…</div>
<div class="b" style="left:943px;top:457px;width:123px">rocksdb::WriteBatch::Iter…</div>
<div class="b" style="left:1067px;top:457px;width:39px">rocks…</div>
<div class="b" style="left:1107px;top:457px;width:41px">std::_…</div>
<div class="b" style="left:1149px;top:457px;width:39px">open</div>
<div class="b" style="left:1189px;top:457px;width:41px">hashb…</div>
<div class="b" style="left:1231px;top:457px;width:39px">&lt;std::…</div>
<div class="b" style="left:1435px;top:457px;width:41px">std::p…</div>
<div class="b" style="left:41px;top:473px;width:39px">rocks…</div>
<div class="b" style="left:123px;top:473px;width:39px">alloc::…</div>
<div class="b" style="left:163px;top:473px;width:41px">rocks…</div>
<div class="b" style="left:205px;top:473px;width:39px">rocks…</div>
<div class="b" style="left:245px;top:473px;width:41px">rocks…</div>
<div class="b" style="left:287px;top:473px;width:39px">rocks…</div>
<div class="b" style="left:327px;top:473px;width:245px">rocksdb::WriteBatchInternal::InsertInto(rocksdb::Wri…</div>
<div class="b" style="left:573px;top:473px;width:81px">rocksdb::Write…</div>
<div class="b" style="left:655px;top:473px;width:41px">rocks…</div>
<div class="b" style="left:697px;top:473px;width:121px">hashbrown::map::make…</div>
<div class="b" style="left:819px;top:473px;width:41px">&lt;core:…</div>
<div class="b" style="left:903px;top:473px;width:39px">rocks…</div>
<div class="b" style="left:943px;top:473px;width:123px">rocksdb::WriteBatchInter…</div>
<div class="b" style="left:1067px;top:473px;width:81px">rocksdb::log::R…</div>
<div class="b" style="left:1149px;top:473px;width:39px">rocks…</div>
<div class="b" style="left:1189px;top:473px;width:41px">hashb…</div>
<div class="b" style="left:1231px;top:473px;width:39px">&lt;std::…</div>
<div class="b" style="left:1313px;top:473px;width:39px">&lt;usiz…</div>
<div class="b" style="left:1435px;top:473px;width:41px">liboxe…</div>
<div class="b" style="left:41px;top:489px;width:39px">rocks…</div>
<div class="b" style="left:81px;top:489px;width:41px">std::_…</div>
<div class="b" style="left:123px;top:489px;width:39px">alloc::…</div>
<div class="b" style="left:163px;top:489px;width:41px">rocks…</div>
<div class="b" style="left:205px;top:489px;width:449px">rocksdb::DBImpl::RecoverLogFiles(std::__1::vector&lt;unsigned long long, std::__1::allocator&lt;unsign…</div>
<div class="b" style="left:655px;top:489px;width:41px">rocks…</div>
<div class="b" style="left:697px;top:489px;width:121px">hashbrown::raw::RawTa…</div>
<div class="b" style="left:819px;top:489px;width:41px">&lt;std::…</div>
<div class="b" style="left:861px;top:489px;width:41px">rocks…</div>
<div class="b" style="left:903px;top:489px;width:245px">rocksdb::DBImpl::RecoverLogFiles(std::__1::vector&lt;…</div>
<div class="b" style="left:1149px;top:489px;width:39px">rocks…</div>
<div class="b" style="left:1189px;top:489px;width:41px">hashb…</div>
<div class="b" style="left:1231px;top:489px;width:39px">core::…</div>
<div class="b" style="left:1313px;top:489px;width:39px">&lt;core…</div>
<div class="b" style="left:1435px;top:489px;width:41px">core::…</div>
<div class="b" style="left:41px;top:505px;width:39px">rocks…</div>
<div class="b" style="left:81px;top:505px;width:41px">std::_…</div>
<div class="b" style="left:123px;top:505px;width:39px">alloc::…</div>
<div class="b" style="left:163px;top:505px;width:41px">rocks…</div>
<div class="b" style="left:205px;top:505px;width:491px">rocksdb::DBImpl::Recover(std::__1::vector&lt;rocksdb::ColumnFamilyDescriptor, std::__1::allocator&lt;rocksdb::…</div>
<div class="b" style="left:697px;top:505px;width:121px">hashbrown::raw::RawTa…</div>
<div class="b" style="left:819px;top:505px;width:41px">core::…</div>
<div class="b" style="left:861px;top:505px;width:41px">rocks…</div>
<div class="b" style="left:903px;top:505px;width:285px">rocksdb::DBImpl::Recover(std::__1::vector&lt;rocksdb::Column…</div>
<div class="b" style="left:1189px;top:505px;width:41px">hashb…</div>
<div class="b" style="left:1231px;top:505px;width:39px">&lt;Q a…</div>
<div class="b" style="left:1271px;top:505px;width:41px">core::…</div>
<div class="b" style="left:1313px;top:505px;width:39px">core::…</div>
<div class="b" style="left:1435px;top:505px;width:41px">&lt;core:…</div>
<div class="b" style="left:41px;top:521px;width:39px">rocks…</div>
<div class="b" style="left:81px;top:521px;width:41px">std::_…</div>
<div class="b" style="left:123px;top:521px;width:39px">&lt;T as…</div>
<div class="b" style="left:163px;top:521px;width:41px">rocks…</div>
<div class="b" style="left:205px;top:521px;width:491px">rocksdb::DBImplReadOnly::OpenForReadOnlyWithoutCheck(rocksdb::DBOptions const&amp;, std::__1::basic_s…</div>
<div class="b" style="left:697px;top:521px;width:121px">hashbrown::raw::RawTa…</div>
<div class="b" style="left:819px;top:521px;width:41px">&lt;std::…</div>
<div class="b" style="left:861px;top:521px;width:41px">rocks…</div>
<div class="b" style="left:903px;top:521px;width:285px">rocksdb::DBImplReadOnly::OpenForReadOnlyWithoutCheck…</div>
<div class="b" style="left:1189px;top:521px;width:41px">hashb…</div>
<div class="b" style="left:1231px;top:521px;width:39px">hash…</div>
<div class="b" style="left:1271px;top:521px;width:41px">&lt;core:…</div>
<div class="b" style="left:1313px;top:521px;width:121px">&lt;std::path::Path as core…</div>
<div class="b" style="left:1435px;top:521px;width:41px">&lt;rayo…</div>
<div class="b" style="left:41px;top:537px;width:39px">rocks…</div>
<div class="b" style="left:81px;top:537px;width:41px">rocks…</div>
<div class="b" style="left:123px;top:537px;width:39px">alloc::…</div>
<div class="b" style="left:163px;top:537px;width:533px">rocksdb::DB::OpenForReadOnly(rocksdb::Options const&amp;, std::__1::basic_string&lt;char, std::__1::char_traits&lt;char&gt;, s…</div>
<div class="b" style="left:697px;top:537px;width:121px">hashbrown::raw::RawTa…</div>
<div class="b" style="left:819px;top:537px;width:41px">&lt;std::…</div>
<div class="b" style="left:861px;top:537px;width:41px">rocks…</div>
<div class="b" style="left:903px;top:537px;width:285px">rocksdb::DB::OpenForReadOnly(rocksdb::Options const&amp;, st…</div>
<div class="b" style="left:1189px;top:537px;width:41px">hashb…</div>
<div class="b" style="left:1231px;top:537px;width:39px">hash…</div>
<div class="b" style="left:1271px;top:537px;width:41px">&lt;core:…</div>
<div class="b" style="left:1313px;top:537px;width:121px">&lt;std::path::PathBuf as c…</div>
<div class="b" style="left:1435px;top:537px;width:41px">rayon:…</div>
<div class="b" style="left:41px;top:553px;width:81px">rocksdb::DBIte…</div>
<div class="b" style="left:123px;top:553px;width:39px">alloc::…</div>
<div class="b" style="left:163px;top:553px;width:533px">rocksdb_open_for_read_only</div>
<div class="b" style="left:697px;top:553px;width:121px">hashbrown::raw::RawTa…</div>
<div class="b" style="left:819px;top:553px;width:41px">core::…</div>
<div class="b" style="left:861px;top:553px;width:41px">rocks…</div>
<div class="b" style="left:903px;top:553px;width:285px">rocksdb_open_for_read_only</div>
<div class="b" style="left:1189px;top:553px;width:41px">hashb…</div>
<div class="b" style="left:1231px;top:553px;width:39px">hash…</div>
<div class="b" style="left:1271px;top:553px;width:41px">&lt;std::…</div>
<div class="b" style="left:1313px;top:553px;width:121px">core::hash::impls::&lt;impl …</div>
<div class="b" style="left:1435px;top:553px;width:41px">rayon:…</div>
<div class="b" style="left:-1px;top:569px;width:41px">core::…</div>
<div class="b" style="left:41px;top:569px;width:81px">rocksdb::Arena…</div>
<div class="b" style="left:123px;top:569px;width:39px">alloc::…</div>
<div class="b" style="left:163px;top:569px;width:533px">rocksdb::db::DBCommon&lt;T,rocksdb::db::DBWithThreadModeInner&gt;::open_raw</div>
<div class="b" style="left:697px;top:569px;width:121px">hashbrown::raw::RawTa…</div>
<div class="b" style="left:819px;top:569px;width:41px">core::…</div>
<div class="b" style="left:861px;top:569px;width:41px">rocks…</div>
<div class="b" style="left:903px;top:569px;width:285px">rocksdb::db::DBCommon&lt;T,rocksdb::db::DBWithThreadMod…</div>
<div class="b" style="left:1189px;top:569px;width:81px">hashbrown::ra…</div>
<div class="b" style="left:1271px;top:569px;width:163px">core::hash::BuildHasher::hash_one</div>
<div class="b" style="left:1435px;top:569px;width:41px">rayon:…</div>
<div class="b" style="left:-1px;top:585px;width:41px">core::…</div>
<div class="b" style="left:41px;top:585px;width:81px">rocksdb_iter_n…</div>
<div class="b" style="left:123px;top:585px;width:39px">std::s…</div>
<div class="b" style="left:163px;top:585px;width:533px">rocksdb::db::DBCommon&lt;T,rocksdb::db::DBWithThreadModeInner&gt;::open_cf_descriptors_internal</div>
<div class="b" style="left:697px;top:585px;width:121px">hashbrown::map::Hash…</div>
<div class="b" style="left:819px;top:585px;width:41px">hashb…</div>
<div class="b" style="left:861px;top:585px;width:41px">rocks…</div>
<div class="b" style="left:903px;top:585px;width:285px">rocksdb::db::DBCommon&lt;T,rocksdb::db::DBWithThreadMod…</div>
<div class="b" style="left:1189px;top:585px;width:81px">hashbrown::m…</div>
<div class="b" style="left:1271px;top:585px;width:163px">hashbrown::map::make_hash</div>
<div class="b" style="left:1435px;top:585px;width:41px">&lt;rayo…</div>
<div class="b" style="left:-1px;top:601px;width:41px">core::…</div>
<div class="b" style="left:41px;top:601px;width:81px">rocksdb::db_ite…</div>
<div class="b" style="left:123px;top:601px;width:39px">std::ff…</div>
<div class="b" style="left:163px;top:601px;width:533px">rocksdb::db::DBCommon&lt;T,rocksdb::db::DBWithThreadModeInner&gt;::open_cf_for_read_only</div>
<div class="b" style="left:697px;top:601px;width:163px">hashbrown::map::HashMap&lt;K,V,…</div>
<div class="b" style="left:861px;top:601px;width:41px">rocks…</div>
<div class="b" style="left:903px;top:601px;width:285px">rocksdb::db::DBCommon&lt;T,rocksdb::db::DBWithThreadMod…</div>
<div class="b" style="left:1189px;top:601px;width:245px">hashbrown::map::HashMap&lt;K,V,S,A&gt;::insert</div>
<div class="b" style="left:1435px;top:601px;width:41px">&lt;rayo…</div>
<div class="b" style="left:-1px;top:617px;width:41px">&lt;libox…</div>
<div class="b" style="left:41px;top:617px;width:81px">&lt;rocksdb::db_it…</div>
<div class="b" style="left:123px;top:617px;width:39px">&lt;std::…</div>
<div class="b" style="left:163px;top:617px;width:533px">rocksdb::db::DBCommon&lt;T,rocksdb::db::DBWithThreadModeInner&gt;::open_for_read_only</div>
<div class="b" style="left:697px;top:617px;width:163px">std::collections::hash::map::Hash…</div>
<div class="b" style="left:861px;top:617px;width:41px">&lt;rock…</div>
<div class="b" style="left:903px;top:617px;width:285px">rocksdb::db::DBCommon&lt;T,rocksdb::db::DBWithThreadMod…</div>
<div class="b" style="left:1189px;top:617px;width:245px">std::collections::hash::map::HashMap&lt;K,V,S&gt;::insert</div>
<div class="b" style="left:1435px;top:617px;width:41px">rayon:…</div>
<div class="b" style="left:-1px;top:633px;width:861px">liboxen::core::v_latest::index::commit_merkle_tree::CommitMerkleTree::dir_hashes</div>
<div class="b" style="left:861px;top:633px;width:573px">liboxen::core::v_latest::index::commit_merkle_tree::CommitMerkleTree::dir_hashes</div>
<div class="b" style="left:1435px;top:633px;width:41px">&lt;rayo…</div>
<div class="b" style="left:-1px;top:649px;width:861px">liboxen::core::v_latest::index::commit_merkle_tree::CommitMerkleTree::dir_without_children</div>
<div class="b" style="left:861px;top:649px;width:573px">liboxen::core::v_latest::index::commit_merkle_tree::CommitMerkleTree::dir_with_children</div>
<div class="b" style="left:1435px;top:649px;width:41px">rayon:…</div>
<div class="b" style="left:-1px;top:665px;width:861px">liboxen::core::v_latest::add::get_dir_status_compared_to_head</div>
<div class="b" style="left:861px;top:665px;width:573px">liboxen::core::v_latest::add::maybe_load_directory</div>
<div class="b" style="left:1435px;top:665px;width:41px">rayon:…</div>
<div class="b" style="left:-1px;top:681px;width:1477px">liboxen::core::v_latest::add::process_add_dir::{{closure}}</div>
<div class="b" style="left:-1px;top:697px;width:1477px">&lt;rayon::iter::map::MapFolder&lt;C,F&gt; as rayon::iter::plumbing::Folder&lt;T&gt;&gt;::consume</div>
<div class="b" style="left:-1px;top:713px;width:1477px">&lt;&amp;rayon::iter::par_bridge::IterParallelProducer&lt;Iter&gt; as rayon::iter::plumbing::UnindexedProducer&gt;::fold_with</div>
<div class="b" style="left:-1px;top:729px;width:1477px">rayon::iter::plumbing::bridge_unindexed_producer_consumer</div>
<div class="b" style="left:-1px;top:745px;width:1477px">rayon::iter::plumbing::bridge_unindexed_producer_consumer::{{closure}}</div>
<div class="b" style="left:-1px;top:761px;width:1477px">rayon_core::join::join_context::call_a::{{closure}}</div>
<div class="b" style="left:-1px;top:777px;width:1477px">&lt;core::panic::unwind_safe::AssertUnwindSafe&lt;F&gt; as core::ops::function::FnOnce&lt;()&gt;&gt;::call_once</div>
<div class="b" style="left:-1px;top:793px;width:1477px">std::panicking::try::do_call</div>
<div class="b" style="left:-1px;top:809px;width:1477px">__rust_try</div>
<div class="b" style="left:-1px;top:825px;width:1477px">std::panicking::try</div>
<div class="b" style="left:-1px;top:841px;width:1477px">std::panic::catch_unwind</div>
<div class="b" style="left:-1px;top:857px;width:1477px">rayon_core::unwind::halt_unwinding</div>
<div class="b" style="left:-1px;top:873px;width:1477px">rayon_core::join::join_context::{{closure}}</div>
<div class="b" style="left:-1px;top:889px;width:1477px">rayon_core::registry::in_worker</div>
</body></html>
